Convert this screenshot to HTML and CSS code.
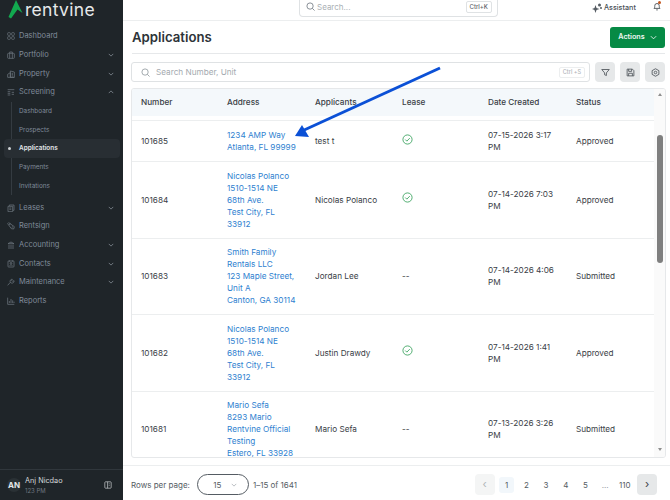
FILE: index.html
```html
<!DOCTYPE html>
<html lang="en">
<head>
	<meta charset="UTF-8">
	<title>Applications</title>
	<link rel="stylesheet" href="styles.css">
</head>
<body>
	<aside class="sidebar">
		<div class="logo">
			<svg class="logo-mark" width="15" height="19" viewBox="0 0 15 19"><path d="M8 0 14.5 13 9.5 9.5 3 18.5 0.5 17Z" fill="#12a94f"/></svg>
			<span class="logo-text">rentvine</span>
		</div>
		<nav class="nav">
			<a class="nav-item"><svg class="nav-icon" viewBox="0 0 12 12"><rect x="1" y="1" width="4" height="4" rx="1"/><rect x="7" y="1" width="4" height="4" rx="1"/><rect x="1" y="7" width="4" height="4" rx="1"/><rect x="7" y="7" width="4" height="4" rx="1"/></svg>Dashboard</a>
			<a class="nav-item"><svg class="nav-icon" viewBox="0 0 12 12"><rect x="1" y="3.5" width="10" height="7.5" rx="1"/><path d="M4 3.5V1.5h4v2M4 3.5V11M8 3.5V11"/></svg>Portfolio<svg class="chev" viewBox="0 0 8 8"><path d="M1 2.5 4 5.5 7 2.5"/></svg></a>
			<a class="nav-item"><svg class="nav-icon" viewBox="0 0 12 12"><path d="M1 11V6.5L5 4v7M5 11V1.5l6 1.5v8ZM1 11h10M7 5h2M7 7h2M7 9h2"/></svg>Property<svg class="chev" viewBox="0 0 8 8"><path d="M1 2.5 4 5.5 7 2.5"/></svg></a>
			<a class="nav-item"><svg class="nav-icon" viewBox="0 0 12 12"><path d="M1 2.5h10M1 5.5h4M1 8h4M1 10.5h4M7 6.5h3.5M7 9.5h3.5"/></svg>Screening<svg class="chev" viewBox="0 0 8 8"><path d="M1 5.5 4 2.5 7 5.5"/></svg></a>
			<div class="subnav">
				<a class="sub-item">Dashboard</a>
				<a class="sub-item">Prospects</a>
				<a class="sub-item active">Applications</a>
				<a class="sub-item">Payments</a>
				<a class="sub-item">Invitations</a>
			</div>
			<a class="nav-item"><svg class="nav-icon" viewBox="0 0 12 12"><path d="M1.5 3.5h2V1.5h7v8h-2v2h-7ZM3.5 3.5h5v6M3.5 6h3M3.5 8h3"/></svg>Leases<svg class="chev" viewBox="0 0 8 8"><path d="M1 2.5 4 5.5 7 2.5"/></svg></a>
			<a class="nav-item"><svg class="nav-icon" viewBox="0 0 12 12"><path d="M1 2.5 2.5 1 11 7l-1 3.5L6.5 10ZM3 4l2.5-1.5M7 8l2-1"/></svg>Rentsign</a>
			<a class="nav-item"><svg class="nav-icon" viewBox="0 0 12 12"><path d="M1.5 4 6 1.5 10.5 4ZM3 5.5V9M6 5.5V9M9 5.5V9M1.5 10.5h9"/></svg>Accounting<svg class="chev" viewBox="0 0 8 8"><path d="M1 2.5 4 5.5 7 2.5"/></svg></a>
			<a class="nav-item"><svg class="nav-icon" viewBox="0 0 12 12"><rect x="1.5" y="1.5" width="9" height="9" rx="1"/><circle cx="6" cy="5" r="1.3"/><path d="M3.8 8.5c.6-1.5 3.8-1.5 4.4 0M3.5.5v2M8.5.5v2"/></svg>Contacts<svg class="chev" viewBox="0 0 8 8"><path d="M1 2.5 4 5.5 7 2.5"/></svg></a>
			<a class="nav-item"><svg class="nav-icon" viewBox="0 0 12 12"><path d="M1 11 5 6.5M5 6.5a3 3 0 0 1 3-4.5L7 3.5 8.5 5 10.5 4a3 3 0 0 1-4 3.5Z"/></svg>Maintenance<svg class="chev" viewBox="0 0 8 8"><path d="M1 2.5 4 5.5 7 2.5"/></svg></a>
			<a class="nav-item"><svg class="nav-icon" viewBox="0 0 12 12"><path d="M1 1v10h10M3.5 9V6M6 9V3M8.5 9V5M10.5 9V7"/></svg>Reports</a>
		</nav>
		<div class="user">
			<span class="avatar">AN</span>
			<div class="user-info">
				<div class="user-name">Anj Nicdao</div>
				<div class="user-sub">123 PM</div>
			</div>
			<svg class="collapse" viewBox="0 0 10 10"><rect x="1" y="1" width="8" height="8" rx="1"/><path d="M4.5 1v8M6 3.5h1M6 5.5h1"/></svg>
		</div>
	</aside>

	<main class="main">
		<header class="topbar">
			<div class="global-search">
				<svg class="search-icon" width="9" height="9" viewBox="0 0 10 10"><circle cx="4.5" cy="4.5" r="3.5"/><path d="M7 7l2.5 2.5"/></svg>
				<span class="global-text">Search...</span>
				<kbd class="key">Ctrl+K</kbd>
			</div>
			<div class="assistant">
				<svg width="10" height="10" viewBox="0 0 10 10"><path d="M3.5 2 4.5 5 7.5 6 4.5 7 3.5 10 2.5 7 0 6 2.5 5Z" fill="#555c63"/><circle cx="7.5" cy="2" r="1.5" fill="#555c63"/><circle cx="9" cy="5" r="1" fill="#555c63"/></svg>
				Assistant
			</div>
			<div class="bell">
				<svg width="8" height="9" viewBox="0 0 10 12"><path d="M1 8.5c1-1 1-2 1-3.5a3 3 0 0 1 6 0c0 1.500 0 2.500 1 3.500ZM4 10.500h2"/></svg>
				<span class="bell-dot"></span>
			</div>
		</header>

		<div class="title-row">
			<h1 class="title">Applications</h1>
			<button class="actions">Actions <svg width="7" height="7" viewBox="0 0 8 8"><path d="M1 2.5 4 5.5 7 2.5"/></svg></button>
		</div>

		<div class="filter-row">
			<div class="table-search">
				<svg class="search-icon" width="9" height="9" viewBox="0 0 10 10"><circle cx="4.5" cy="4.5" r="3.5"/><path d="M7 7l2.5 2.5"/></svg>
				<span class="table-search-text">Search Number, Unit</span>
				<kbd class="key light">Ctrl +S</kbd>
			</div>
			<button class="tool"><svg viewBox="0 0 12 12"><path d="M1 2h10L7.2 6.5V10L4.800 9V6.500Z"/></svg></button>
			<button class="tool"><svg viewBox="0 0 12 12"><path d="M1.5 1.5h7l2 2v7h-9ZM3.5 1.5v3h4v-3M3.5 10.5V7h5v3.500"/></svg></button>
			<button class="tool"><svg viewBox="0 0 12 12"><path d="M6 1 10.5 3.5v5L6 11 1.5 8.5v-5Z"/><circle cx="6" cy="6" r="1.7"/></svg></button>
		</div>

		<section class="table-wrap">
			<div class="table">
				<div class="row head">
					<div>Number</div><div>Address</div><div>Applicants</div><div>Lease</div><div>Date Created</div><div>Status</div>
				</div>
				<div class="row r1">
					<div>101685</div>
					<div><a class="link">1234 AMP Way<br>Atlanta, FL 99999</a></div>
					<div>test t</div>
					<div><svg class="ok" viewBox="0 0 12 12"><circle cx="6" cy="6" r="5"/><path d="M3.5 6 5.3 7.8 8.5 4.5"/></svg></div>
					<div>07-15-2026 3:17 PM</div>
					<div>Approved</div>
				</div>
				<div class="row r2">
					<div>101684</div>
					<div><a class="link">Nicolas Polanco<br>1510-1514 NE<br>68th Ave.<br>Test City, FL<br>33912</a></div>
					<div>Nicolas Polanco</div>
					<div><svg class="ok" viewBox="0 0 12 12"><circle cx="6" cy="6" r="5"/><path d="M3.5 6 5.3 7.8 8.5 4.5"/></svg></div>
					<div>07-14-2026 7:03 PM</div>
					<div>Approved</div>
				</div>
				<div class="row r2">
					<div>101683</div>
					<div><a class="link">Smith Family<br>Rentals LLC<br>123 Maple Street,<br>Unit A<br>Canton, GA 30114</a></div>
					<div>Jordan Lee</div>
					<div>--</div>
					<div>07-14-2026 4:06 PM</div>
					<div>Submitted</div>
				</div>
				<div class="row r2">
					<div>101682</div>
					<div><a class="link">Nicolas Polanco<br>1510-1514 NE<br>68th Ave.<br>Test City, FL<br>33912</a></div>
					<div>Justin Drawdy</div>
					<div><svg class="ok" viewBox="0 0 12 12"><circle cx="6" cy="6" r="5"/><path d="M3.5 6 5.3 7.8 8.5 4.5"/></svg></div>
					<div>07-14-2026 1:41 PM</div>
					<div>Approved</div>
				</div>
				<div class="row r2">
					<div>101681</div>
					<div><a class="link">Mario Sefa<br>8293 Mario<br>Rentvine Official<br>Testing<br>Estero, FL 33928</a></div>
					<div>Mario Sefa</div>
					<div>--</div>
					<div>07-13-2026 3:26 PM</div>
					<div>Submitted</div>
				</div>
			</div>
			<div class="scrollbar">
				<span class="arrow-up"></span>
				<div class="thumb-track"><div class="thumb"></div></div>
				<span class="arrow-down"></span>
			</div>
		</section>

		<footer class="pager">
			<span>Rows per page:</span>
			<div class="rows-select">15 <svg width="6" height="6" viewBox="0 0 8 8"><path d="M1 2.5 4 5.5 7 2.5"/></svg></div>
			<span>1–15 of 1641</span>
			<div class="pages">
				<button class="page-btn off">‹</button>
				<span class="page current">1</span>
				<span class="page">2</span>
				<span class="page">3</span>
				<span class="page">4</span>
				<span class="page">5</span>
				<span class="page dots">...</span>
				<span class="page">110</span>
				<button class="page-btn on">›</button>
			</div>
		</footer>
	</main>

	<svg class="callout" width="670" height="500" viewBox="0 0 670 500">
		<path d="M440 68 302 131" stroke="#0b50d6" stroke-width="3" fill="none"/>
		<path d="M295 136 302 125 309 137Z" fill="#0b50d6"/>
	</svg>
</body>
</html>
```

FILE: styles.css
```css
* {
	box-sizing: border-box;
}
body {
	margin: 0;
	display: flex;
	width: 670px;
	height: 500px;
	overflow: hidden;
	position: relative;
	background: #fff;
	color: #3a4046;
	font: 8.2px/12px Inter, "Liberation Sans", sans-serif;
}

/* sidebar */
.sidebar {
	width: 123px;
	flex: none;
	background: #1f2529;
	display: flex;
	flex-direction: column;
	color: #7f8b99;
}
.logo {
	height: 27px;
	display: flex;
	align-items: flex-start;
	padding-left: 8px;
	gap: 2px;
	overflow: hidden;
}
.logo-text {
	color: #e6e8ea;
	font-size: 17.5px;
	line-height: 20px;
	letter-spacing: .3px;
}
.nav {
	flex: 1;
}
.nav-item {
	height: 18.7px;
	display: flex;
	align-items: center;
	padding: 0 9px 0 7px;
	gap: 4px;
	font-size: 7.5px;
}
.nav-icon {
	width: 8px;
	height: 8px;
	flex: none;
	fill: none;
	stroke: #6d7780;
	stroke-width: 1.1;
}
.chev {
	width: 6px;
	height: 6px;
	margin-left: auto;
	fill: none;
	stroke: #8b949c;
	stroke-width: 1;
}
.subnav {
	margin: 0 0 3px 11px;
	border-left: 1px solid #343b41;
}
.sub-item {
	height: 18.7px;
	display: flex;
	align-items: center;
	padding-left: 7px;
	font-size: 6.4px;
	position: relative;
}
.sub-item.active {
	color: #e3e6e9;
	font-weight: 600;
	background: #282e33;
	border-radius: 4px;
	margin: 0 3px 0 -8px;
	padding-left: 15px;
}
.sub-item.active::before {
	content: "";
	position: absolute;
	left: 3.5px;
	top: 8px;
	width: 3px;
	height: 3px;
	border-radius: 50%;
	background: #cfd3d6;
}
.user {
	height: 31px;
	border-top: 1px solid #30373c;
	display: flex;
	align-items: center;
	padding: 0 11px 0 7px;
	gap: 4px;
}
.avatar {
	width: 14px;
	height: 14px;
	border-radius: 50%;
	background: #2a3135;
	color: #e3e6e9;
	font-size: 8px;
	font-weight: 700;
	display: flex;
	align-items: center;
	justify-content: center;
	flex: none;
}
.user-info {
	flex: 1;
}
.user-name {
	color: #d5d8da;
	font-size: 7.3px;
	line-height: 10px;
}
.user-sub {
	color: #6f7880;
	font-size: 6px;
	line-height: 9px;
}
.collapse {
	width: 8px;
	height: 8px;
	fill: none;
	stroke: #c5c9cc;
	stroke-width: .9;
}

/* main */
.main {
	flex: 1;
	min-width: 0;
	display: flex;
	flex-direction: column;
}
.topbar {
	height: 21px;
	flex: none;
	display: flex;
	align-items: flex-start;
	border-bottom: 1px solid #eceeef;
	padding-left: 176px;
}
.global-search {
	width: 199px;
	height: 17px;
	border: 1px solid #dfe2e4;
	border-top: 0;
	border-radius: 0 0 4px 4px;
	display: flex;
	align-items: center;
	padding: 0 5px 3px 6px;
	gap: 2px;
}
.search-icon {
	flex: none;
	fill: none;
	stroke: #7d858c;
	stroke-width: 1;
}
.global-text {
	color: #aab0b5;
	font-size: 8px;
}
.key {
	margin-left: auto;
	font: 500 6px/10px Inter, "Liberation Sans", sans-serif;
	color: #5d646a;
	border: 1px solid #dfe2e4;
	border-radius: 2px;
	padding: 0 3px;
}
.key.light {
	color: #b0b5b9;
	border-color: #eceeef;
	font-size: 5.5px;
	line-height: 9px;
}
.assistant {
	margin-left: 94px;
	display: flex;
	align-items: center;
	gap: 2px;
	height: 15px;
	font-size: 7.2px;
	font-weight: 500;
	color: #4a5056;
}
.bell {
	margin-left: 17px;
	padding-top: 2px;
	position: relative;
	height: 14px;
}
.bell svg {
	fill: none;
	stroke: #4a5056;
	stroke-width: 1.2;
}
.bell-dot {
	position: absolute;
	top: 1px;
	right: 0;
	width: 3px;
	height: 3px;
	border-radius: 50%;
	background: #c2541d;
}
.title-row {
	height: 33px;
	flex: none;
	display: flex;
	align-items: center;
	justify-content: space-between;
	margin: 0 5px 0 9px;
	border-bottom: 1px solid #e6e8ea;
}
.title {
	margin: 0;
	font-size: 13.2px;
	line-height: 20px;
	font-weight: 600;
	color: #2d3338;
}
.actions {
	width: 55px;
	height: 21px;
	border: 0;
	border-radius: 3px;
	background: #068a45;
	color: #eef7f2;
	font: 600 7.2px/10px Inter, "Liberation Sans", sans-serif;
	display: flex;
	align-items: center;
	justify-content: center;
	gap: 5px;
}
.actions svg {
	fill: none;
	stroke: #eef7f2;
	stroke-width: 1;
}
.filter-row {
	flex: none;
	display: flex;
	align-items: center;
	margin: 8px 5px 6px 8px;
	gap: 5px;
}
.table-search {
	flex: 1;
	height: 20px;
	border: 1px solid #dfe2e4;
	border-radius: 3px;
	display: flex;
	align-items: center;
	padding: 0 4px 0 9px;
	gap: 6px;
}
.table-search .search-icon {
	stroke: #9aa1a6;
}
.table-search-text {
	color: #a4aaaf;
	font-size: 8.2px;
}
.tool {
	width: 20px;
	height: 20px;
	border: 0;
	border-radius: 4px;
	background: #e6e8e9;
	padding: 0;
	display: flex;
	align-items: center;
	justify-content: center;
}
.tool svg {
	width: 9px;
	height: 9px;
	fill: none;
	stroke: #4a5056;
	stroke-width: 1.1;
}

/* table */
.table-wrap {
	margin: 0 4px 0 8px;
	height: 370px;
	flex: none;
	border: 1px solid #e6e8ea;
	border-radius: 3px;
	display: flex;
	overflow: hidden;
}
.table {
	flex: 1;
	min-width: 0;
	overflow: hidden;
}
.row {
	display: grid;
	grid-template-columns: 86px 88px 87px 86px 88px 1fr;
	align-items: center;
	border-bottom: 1px solid #eceeef;
	line-height: 12px;
}
.row > div {
	padding: 0 8px 0 9px;
}
.row.head {
	height: 27px;
	padding-bottom: 2px;
	background: #f4f8fb;
	border-bottom: 0;
	margin-bottom: 5px;
	font-weight: 500;
	box-shadow: 0 4px 0 #fff, 0 5px 0 #eceeef;
}
.r1 {
	height: 41px;
}
.r2 {
	height: 76.5px;
}
.link {
	color: #2f7fd0;
	display: block;
}
.ok {
	display: block;
	width: 11px;
	height: 11px;
	margin-top: -4px;
	fill: none;
	stroke: #2f9e56;
	stroke-width: .9;
}

/* scrollbar */
.scrollbar {
	width: 11px;
	flex: none;
	background: #fafafa;
	display: flex;
	flex-direction: column;
	align-items: center;
	padding: 4px 0 6px;
}
.arrow-up, .arrow-down {
	width: 0;
	height: 0;
	border-left: 2.5px solid transparent;
	border-right: 2.5px solid transparent;
	flex: none;
}
.arrow-up {
	border-bottom: 3px solid #8f8f8f;
}
.arrow-down {
	border-top: 3px solid #8f8f8f;
}
.thumb-track {
	flex: 1;
	width: 100%;
	padding: 39px 2px 0;
}
.thumb {
	height: 128px;
	width: 6px;
	margin: 0 auto;
	background: #7f7f7f;
	border-radius: 3px;
}

/* footer */
.pager {
	margin-top: 7px;
	flex: 1;
	border-top: 1px solid #eceeef;
	display: flex;
	align-items: center;
	padding: 3px 13px 0 8px;
	gap: 4px;
	font-size: 8px;
	color: #555c63;
}
.pager > span:first-child {
	margin-right: 3px;
}
.rows-select {
	width: 52px;
	height: 21px;
	border: 1px solid #555c63;
	border-radius: 11px;
	display: flex;
	align-items: center;
	justify-content: center;
	gap: 10px;
	padding-left: 5px;
}
.rows-select svg {
	fill: none;
	stroke: #a4aaaf;
	stroke-width: 1;
}
.pages {
	margin-left: auto;
	display: flex;
	align-items: center;
	gap: 4.7px;
}
.page {
	min-width: 15px;
	height: 16px;
	display: flex;
	align-items: center;
	justify-content: center;
}
.page.current {
	background: #f2f7fb;
	border-radius: 3px;
}
.page.dots {
	color: #8c9298;
}
.page-btn {
	width: 20px;
	height: 21px;
	border: 0;
	border-radius: 4px;
	padding: 0 0 2px;
	font: 11px/12px Inter, "Liberation Sans", sans-serif;
}
.page-btn.off {
	background: #f4f5f5;
	color: #b0b5b9;
}
.page-btn.on {
	background: #e6e8e9;
	color: #3a4046;
}

/* the arrow drawn over the page */
.callout {
	position: absolute;
	top: 0;
	left: 0;
	pointer-events: none;
}
```
